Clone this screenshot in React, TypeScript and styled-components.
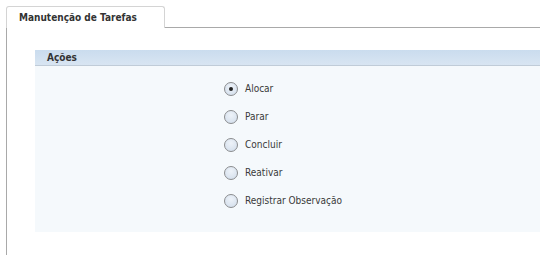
import { useState } from "react";
import styled, { createGlobalStyle } from "styled-components";

const GlobalStyle = createGlobalStyle`
  html, body {
    margin: 0;
    padding: 0;
    background: #ffffff;
  }
  body {
    font-family: "DejaVu Sans Condensed", "DejaVu Sans", Verdana, sans-serif;
    font-stretch: condensed;
    color: #333333;
  }
`;

const Page = styled.div`
  width: 540px;
  height: 255px;
  padding: 6px 0 0 6px;
  box-sizing: border-box;
  overflow: hidden;
`;

const TabStrip = styled.div`
  display: flex;
  align-items: flex-end;
  height: 22px;
`;

const Tab = styled.div`
  width: 159px;
  height: 22px;
  box-sizing: border-box;
  border: 1px solid #d4d4d4;
  border-bottom: none;
  border-radius: 3px 3px 0 0;
  padding: 5px 0 0 12px;
  font-size: 10px;
  font-weight: bold;
  color: #333333;
`;

const TabFiller = styled.div`
  flex: 1;
  border-bottom: 1px solid #a9a9a9;
`;

const TabBody = styled.div`
  border-left: 1px solid #a9a9a9;
  height: 227px;
  padding: 22px 0 0 28px;
  box-sizing: border-box;
`;

const Panel = styled.div`
  display: flex;
  flex-direction: column;
  height: 182px;
`;

const PanelHeader = styled.div`
  height: 16px;
  box-sizing: border-box;
  padding: 2px 0 0 12px;
  background: linear-gradient(#cadcee, #d8e5f2);
  border-bottom: 1px solid #c0ccd8;
  font-size: 10px;
  font-weight: bold;
  color: #333333;
`;

const PanelBody = styled.div`
  flex: 1;
  background: #f5f9fc;
  padding: 15px 0 0 189px;
  display: flex;
  flex-direction: column;
  gap: 13px;
`;

const Option = styled.label`
  display: flex;
  align-items: center;
  height: 15px;
  gap: 7px;
  font-size: 10px;
  color: #3a3a3a;
  cursor: pointer;
`;

const RadioCircle = styled.span<{ $checked: boolean }>`
  width: 14px;
  height: 14px;
  box-sizing: border-box;
  border-radius: 50%;
  border: 1px solid #8a8c8e;
  background: radial-gradient(circle at 50% 35%, #eef3f9, #d0dcea);
  display: flex;
  align-items: center;
  justify-content: center;

  &::after {
    content: "";
    width: 4px;
    height: 4px;
    border-radius: 50%;
    background: #222222;
    display: ${(p) => (p.$checked ? "block" : "none")};
  }
`;

const options = ["Alocar", "Parar", "Concluir", "Reativar", "Registrar Observação"];

export default function App() {
  const [selected, setSelected] = useState("Alocar");

  return (
    <Page>
      <GlobalStyle />
      <TabStrip>
        <Tab>Manutenção de Tarefas</Tab>
        <TabFiller />
      </TabStrip>
      <TabBody>
        <Panel>
          <PanelHeader>Ações</PanelHeader>
          <PanelBody>
            {options.map((opt) => (
              <Option key={opt} onClick={() => setSelected(opt)}>
                <RadioCircle $checked={selected === opt} />
                {opt}
              </Option>
            ))}
          </PanelBody>
        </Panel>
      </TabBody>
    </Page>
  );
}
